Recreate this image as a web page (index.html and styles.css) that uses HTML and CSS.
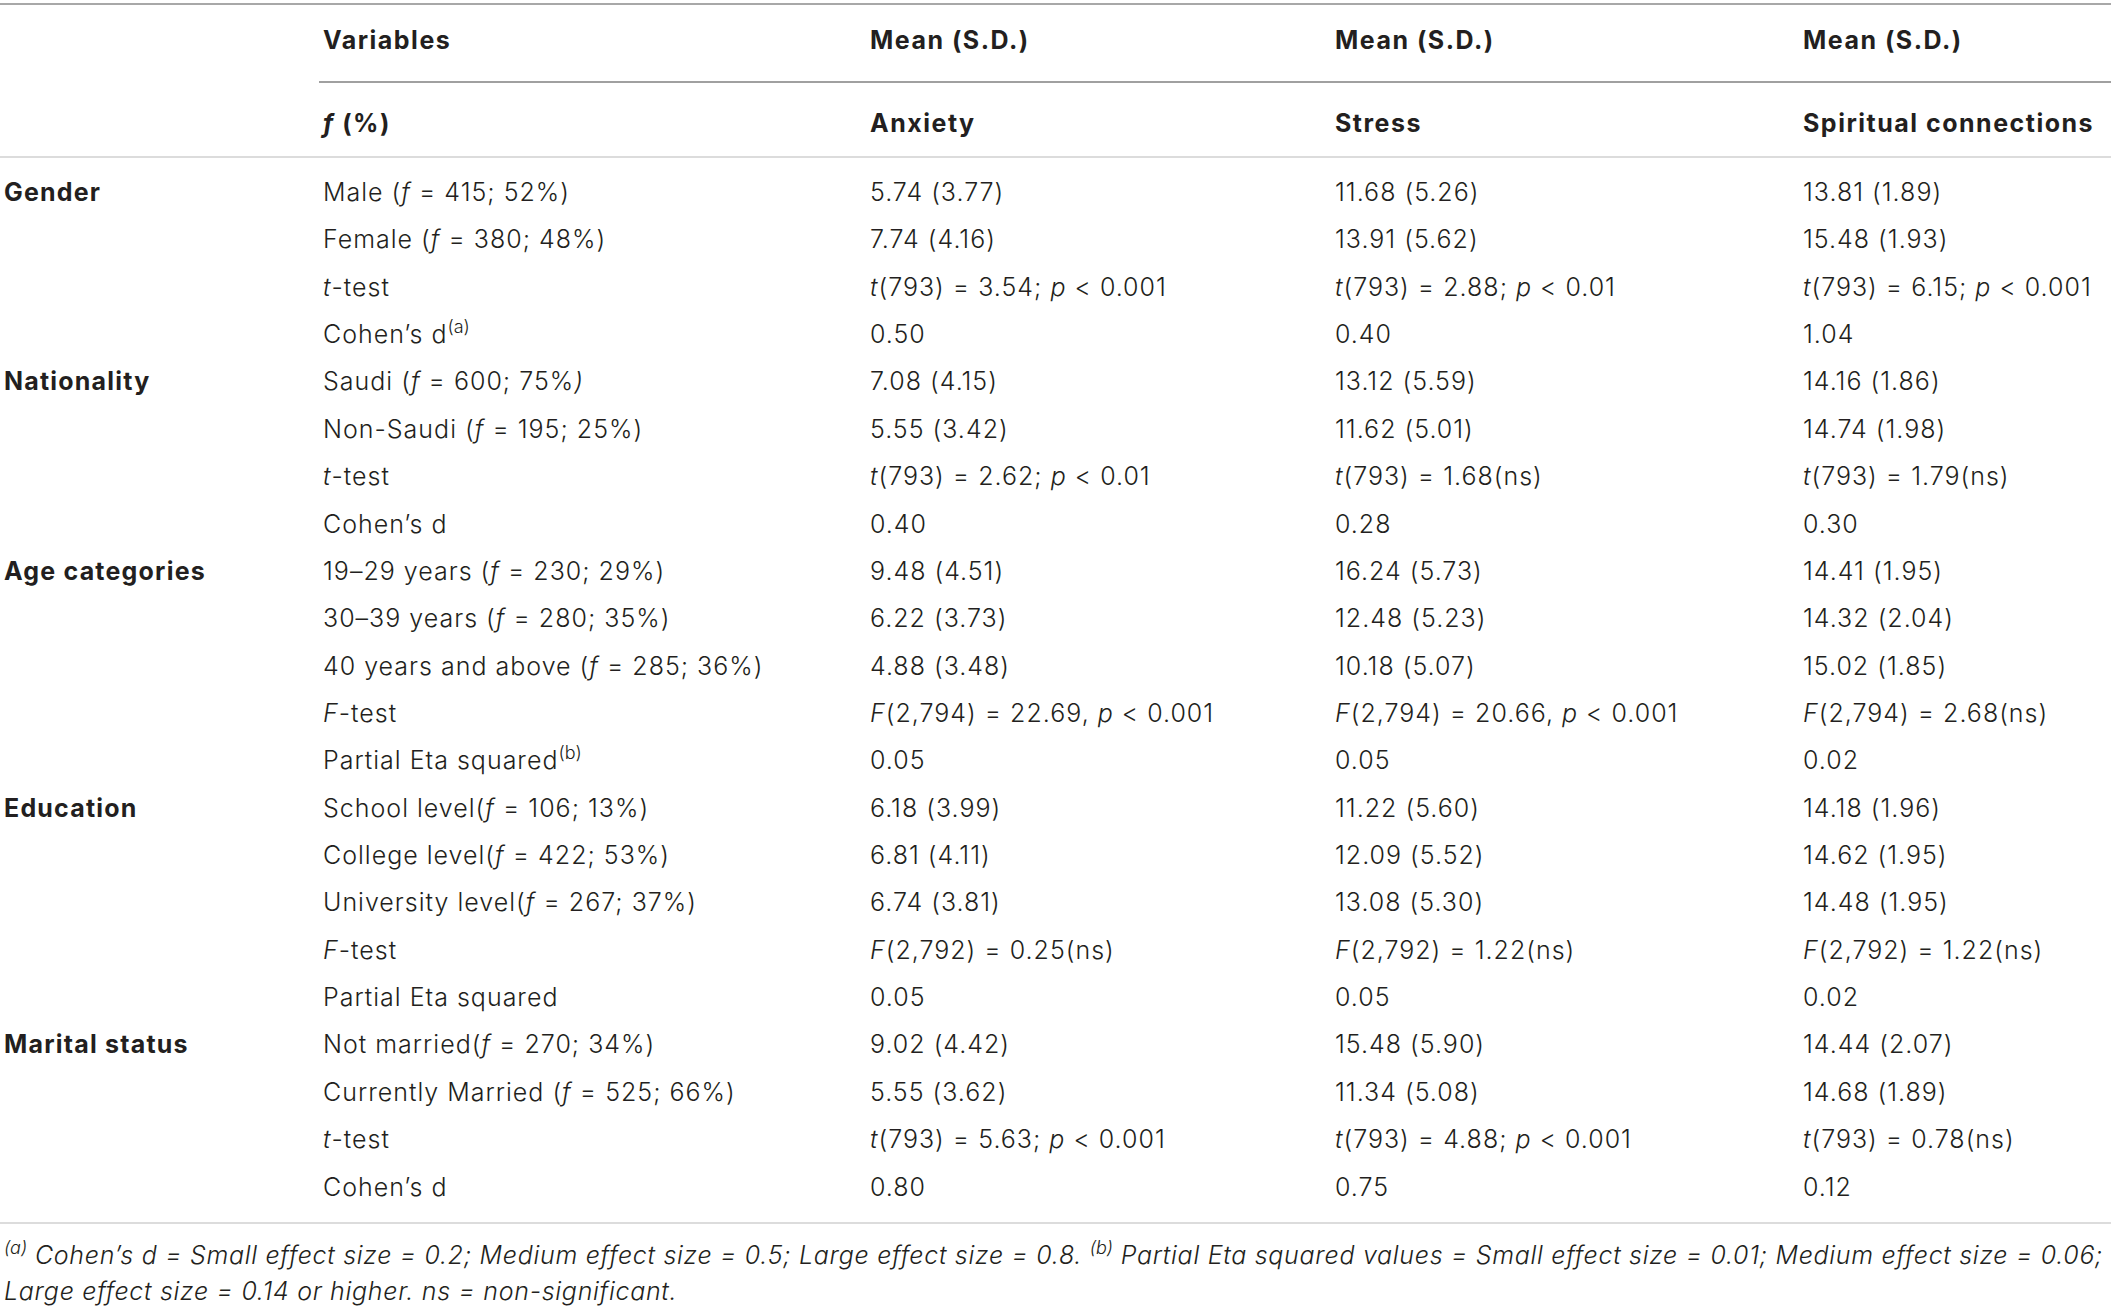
FILE: index.html
```html
<!DOCTYPE html>
<html lang="en">
<head>
    <meta charset="UTF-8">
    <title>Table - Mean and S.D. by demographic variables</title>
    <link rel="stylesheet" href="styles.css">
</head>
<body>
    <table class="stats">
        <colgroup>
            <col class="c-group">
            <col class="c-var">
            <col class="c-anx">
            <col class="c-str">
            <col class="c-spi">
        </colgroup>
        <thead>
            <tr class="head-top">
                <th></th>
                <th class="ruled">Variables</th>
                <th class="ruled">Mean (S.D.)</th>
                <th class="ruled">Mean (S.D.)</th>
                <th class="ruled">Mean (S.D.)</th>
            </tr>
            <tr class="head-sub">
                <th></th>
                <th><i>f</i> (%)</th>
                <th>Anxiety</th>
                <th>Stress</th>
                <th>Spiritual connections</th>
            </tr>
        </thead>
        <tbody>
            <tr>
                <td class="group">Gender</td>
                <td>Male (<i>f</i> = 415; 52%)</td>
                <td>5.74 (3.77)</td>
                <td>11.68 (5.26)</td>
                <td>13.81 (1.89)</td>
            </tr>
            <tr>
                <td></td>
                <td>Female (<i>f</i> = 380; 48%)</td>
                <td>7.74 (4.16)</td>
                <td>13.91 (5.62)</td>
                <td>15.48 (1.93)</td>
            </tr>
            <tr>
                <td></td>
                <td><i>t</i>-test</td>
                <td><i>t</i>(793) = 3.54; <i>p</i> &lt; 0.001</td>
                <td><i>t</i>(793) = 2.88; <i>p</i> &lt; 0.01</td>
                <td><i>t</i>(793) = 6.15; <i>p</i> &lt; 0.001</td>
            </tr>
            <tr>
                <td></td>
                <td>Cohen’s d<sup>(a)</sup></td>
                <td>0.50</td>
                <td>0.40</td>
                <td>1.04</td>
            </tr>
            <tr>
                <td class="group">Nationality</td>
                <td>Saudi (<i>f</i> = 600; 75%<i>)</i></td>
                <td>7.08 (4.15)</td>
                <td>13.12 (5.59)</td>
                <td>14.16 (1.86)</td>
            </tr>
            <tr>
                <td></td>
                <td>Non-Saudi (<i>f</i> = 195; 25%)</td>
                <td>5.55 (3.42)</td>
                <td>11.62 (5.01)</td>
                <td>14.74 (1.98)</td>
            </tr>
            <tr>
                <td></td>
                <td><i>t</i>-test</td>
                <td><i>t</i>(793) = 2.62; <i>p</i> &lt; 0.01</td>
                <td><i>t</i>(793) = 1.68(ns)</td>
                <td><i>t</i>(793) = 1.79(ns)</td>
            </tr>
            <tr>
                <td></td>
                <td>Cohen’s d</td>
                <td>0.40</td>
                <td>0.28</td>
                <td>0.30</td>
            </tr>
            <tr>
                <td class="group">Age categories</td>
                <td>19–29 years (<i>f</i> = 230; 29%)</td>
                <td>9.48 (4.51)</td>
                <td>16.24 (5.73)</td>
                <td>14.41 (1.95)</td>
            </tr>
            <tr>
                <td></td>
                <td>30–39 years (<i>f</i> = 280; 35%)</td>
                <td>6.22 (3.73)</td>
                <td>12.48 (5.23)</td>
                <td>14.32 (2.04)</td>
            </tr>
            <tr>
                <td></td>
                <td>40 years and above (<i>f</i> = 285; 36%)</td>
                <td>4.88 (3.48)</td>
                <td>10.18 (5.07)</td>
                <td>15.02 (1.85)</td>
            </tr>
            <tr>
                <td></td>
                <td><i>F</i>-test</td>
                <td><i>F</i>(2,794) = 22.69, <i>p</i> &lt; 0.001</td>
                <td><i>F</i>(2,794) = 20.66, <i>p</i> &lt; 0.001</td>
                <td><i>F</i>(2,794) = 2.68(ns)</td>
            </tr>
            <tr>
                <td></td>
                <td>Partial Eta squared<sup>(b)</sup></td>
                <td>0.05</td>
                <td>0.05</td>
                <td>0.02</td>
            </tr>
            <tr>
                <td class="group">Education</td>
                <td>School level(<i>f</i> = 106; 13%)</td>
                <td>6.18 (3.99)</td>
                <td>11.22 (5.60)</td>
                <td>14.18 (1.96)</td>
            </tr>
            <tr>
                <td></td>
                <td>College level(<i>f</i> = 422; 53%)</td>
                <td>6.81 (4.11)</td>
                <td>12.09 (5.52)</td>
                <td>14.62 (1.95)</td>
            </tr>
            <tr>
                <td></td>
                <td>University level(<i>f</i> = 267; 37%)</td>
                <td>6.74 (3.81)</td>
                <td>13.08 (5.30)</td>
                <td>14.48 (1.95)</td>
            </tr>
            <tr>
                <td></td>
                <td><i>F</i>-test</td>
                <td><i>F</i>(2,792) = 0.25(ns)</td>
                <td><i>F</i>(2,792) = 1.22(ns)</td>
                <td><i>F</i>(2,792) = 1.22(ns)</td>
            </tr>
            <tr>
                <td></td>
                <td>Partial Eta squared</td>
                <td>0.05</td>
                <td>0.05</td>
                <td>0.02</td>
            </tr>
            <tr>
                <td class="group">Marital status</td>
                <td>Not married(<i>f</i> = 270; 34%)</td>
                <td>9.02 (4.42)</td>
                <td>15.48 (5.90)</td>
                <td>14.44 (2.07)</td>
            </tr>
            <tr>
                <td></td>
                <td>Currently Married (<i>f</i> = 525; 66%)</td>
                <td>5.55 (3.62)</td>
                <td>11.34 (5.08)</td>
                <td>14.68 (1.89)</td>
            </tr>
            <tr>
                <td></td>
                <td><i>t</i>-test</td>
                <td><i>t</i>(793) = 5.63; <i>p</i> &lt; 0.001</td>
                <td><i>t</i>(793) = 4.88; <i>p</i> &lt; 0.001</td>
                <td><i>t</i>(793) = 0.78(ns)</td>
            </tr>
            <tr>
                <td></td>
                <td>Cohen’s d</td>
                <td>0.80</td>
                <td>0.75</td>
                <td>0.12</td>
            </tr>
        </tbody>
    </table>

    <p class="notes">
        <sup>(a)</sup> Cohen’s d = Small effect size = 0.2; Medium effect size = 0.5; Large effect size = 0.8. <sup>(b)</sup> Partial Eta squared values = Small effect size = 0.01; Medium effect size = 0.06; Large effect size = 0.14 or higher. ns = non-significant.
    </p>
</body>
</html>
```

FILE: styles.css
```css
body {
    margin: 0;
    font-family: 'Inter', 'Liberation Sans', sans-serif;
    color: #231f20;
    background: #fff;
}

.stats {
    width: 2111px;
    margin-top: 3px;
    border-collapse: collapse;
    table-layout: fixed;
    border-top: 2px solid #a8a8a8;
    border-bottom: 2px solid #dcdcdc;
    font-size: 25px;
    font-weight: 300;
    letter-spacing: 1px;
}

.c-group { width: 319px; }
.c-var { width: 547px; }
.c-anx { width: 465px; }
.c-str { width: 468px; }

.stats th,
.stats td {
    padding: 0 0 0 4px;
    text-align: left;
    white-space: nowrap;
}

.stats th {
    font-weight: 700;
    letter-spacing: 1.5px;
    vertical-align: middle;
}

.head-top th {
    height: 70px;
    padding-bottom: 6px;
}

.head-top th.ruled {
    border-bottom: 2px solid #a0a0a0;
}

.head-sub th {
    height: 67px;
    padding-top: 6px;
    border-bottom: 2px solid #dcdcdc;
}

.stats td {
    height: 47.36px;
    line-height: 47.36px;
    vertical-align: middle;
}

.stats tbody tr:first-child td {
    padding-top: 11px;
}

.stats tbody tr:last-child td {
    padding-bottom: 11px;
}

.stats td.group {
    font-weight: 700;
    letter-spacing: 1.2px;
}

.stats sup {
    font-size: 18px;
    letter-spacing: 0;
    line-height: 0;
    vertical-align: 10px;
}

.notes {
    margin: 13px 0 0;
    padding-left: 4px;
    font-size: 25px;
    font-weight: 300;
    font-style: italic;
    letter-spacing: 0.7px;
    line-height: 36px;
}

.notes sup {
    font-size: 18px;
    letter-spacing: 0;
    line-height: 0;
    vertical-align: 10px;
}
```
